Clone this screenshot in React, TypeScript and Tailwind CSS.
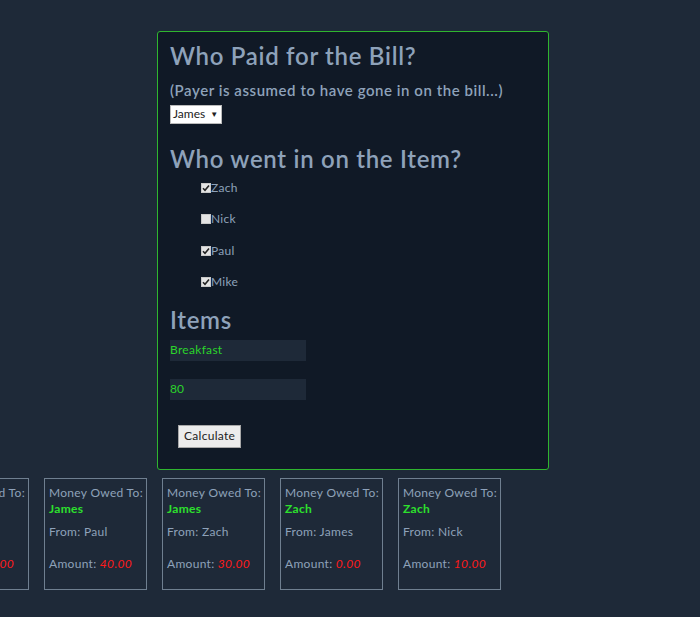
import React from 'react';

interface Debt {
  to: string;
  from: string;
  amount: string;
}

const debts: Debt[] = [
  { to: 'James', from: 'Mike', amount: '40.00' },
  { to: 'James', from: 'Paul', amount: '40.00' },
  { to: 'James', from: 'Zach', amount: '30.00' },
  { to: 'Zach', from: 'James', amount: '0.00' },
  { to: 'Zach', from: 'Nick', amount: '10.00' },
];

const people = [
  { name: 'Zach', checked: true },
  { name: 'Nick', checked: false },
  { name: 'Paul', checked: true },
  { name: 'Mike', checked: true },
];

const Check = ({ checked }: { checked: boolean }) => (
  <span className="w-[10px] h-[10px] bg-[#e4e4e4] border border-[#c8c8c8] flex items-center justify-center">
    {checked && (
      <svg width="8" height="8" viewBox="0 0 8 8">
        <path d="M1 4.2 L3 6.3 L7 1.5" stroke="#222" strokeWidth="1.6" fill="none" />
      </svg>
    )}
  </span>
);

export default function App() {
  return (
    <div className="min-h-[617px] w-[700px] overflow-hidden bg-[#1e2938] pt-[31px] font-['Lato',sans-serif]">
      {/* Main form panel */}
      <div className="ml-[157px] w-[392px] h-[439px] border border-[#2fb52f] rounded-[3px] bg-[#101926] px-3 pt-[8px]">
        <h2 className="text-[24px] leading-[32px] font-semibold tracking-[0.7px] text-[#8ea2ba]">Who Paid for the Bill?</h2>
        <p className="mt-[8px] text-[15px] leading-[20px] font-semibold tracking-[0.55px] text-[#8ea2ba]">
          (Payer is assumed to have gone in on the bill...)
        </p>
        <div className="mt-[3px] inline-flex items-center h-[19px] w-[52px] bg-white border border-[#bbb] px-[2px] text-[12px] text-[#222]">
          <span>James</span>
          <span className="ml-[5px] text-[8px]">▼</span>
        </div>

        <h2 className="mt-[19px] text-[24px] leading-[32px] font-semibold tracking-[0.7px] text-[#8ea2ba]">Who went in on the Item?</h2>
        <div className="ml-[31px] mt-[4px] flex flex-col gap-[14.5px]">
          {people.map((p) => (
            <label key={p.name} className="flex items-center h-[17px] text-[12px] tracking-[0.3px] text-[#8ea2ba]">
              <Check checked={p.checked} />
              <span>{p.name}</span>
            </label>
          ))}
        </div>

        <h2 className="mt-[13px] text-[24px] leading-[32px] font-semibold tracking-[0.7px] text-[#8ea2ba]">Items</h2>
        <div className="mt-[4px] w-[136px] h-[21px] bg-[#1e2938] flex items-center text-[12px] tracking-[0.3px] text-[#2bd42b]">Breakfast</div>
        <div className="mt-[18px] w-[136px] h-[21px] bg-[#1e2938] flex items-center text-[12px] text-[#2bd42b]">80</div>
        <button className="mt-[25px] ml-[8px] h-[23px] px-[5px] bg-[#ececec] border border-[#a8a8a8] text-[12px] tracking-[0.3px] text-[#222]">
          Calculate
        </button>
      </div>

      {/* Results */}
      <div className="mt-[8px] ml-[-74px] flex gap-[15px]">
        {debts.map((d, i) => (
          <div key={i} className="shrink-0 w-[103px] h-[112px] border border-[#6f7f90] px-[4px] pt-[6px] text-[12px] tracking-[0.3px] whitespace-nowrap text-[#8ea2ba]">
            <div className="leading-[16px]">Money Owed To:</div>
            <div className="leading-[16px] font-bold text-[#2de02d]">{d.to}</div>
            <div className="mt-[7px] leading-[16px]">From: {d.from}</div>
            <div className="mt-[16px] leading-[16px]">
              Amount: <span className="italic text-[#ff1a1a]">{d.amount}</span>
            </div>
          </div>
        ))}
      </div>
    </div>
  );
}
